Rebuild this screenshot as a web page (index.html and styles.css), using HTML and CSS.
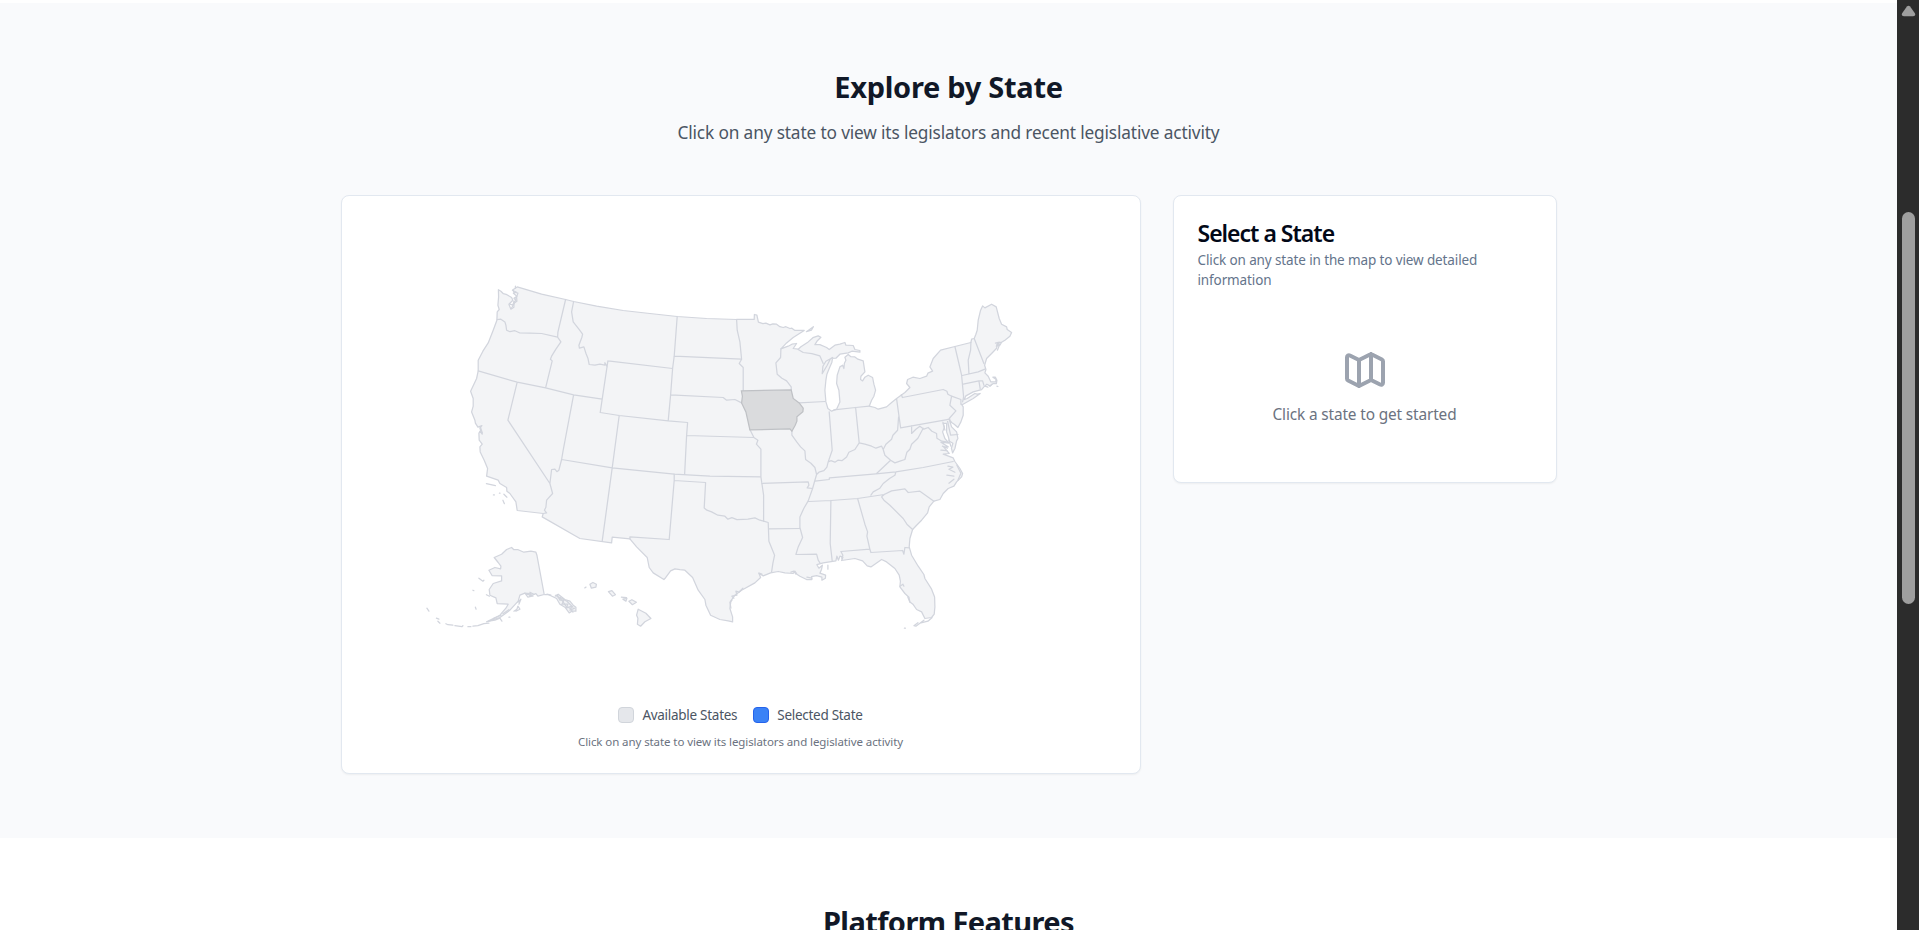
FILE: index.html
```html
<!DOCTYPE html>
<html lang="en">
<head>
<meta charset="utf-8">
<title>Explore by State</title>
<link rel="stylesheet" href="styles.css">
</head>
<body>
<div class="viewport">
<main class="page">
  <section class="explore">
    <div class="container">
      <h2 class="heading"><span class="t-explore">Explore by State</span></h2>
      <p class="lead"><span class="t-lead">Click on any state to view its legislators and recent legislative activity</span></p>
      <div class="grid">
        <div class="card map-card">
          <svg class="us-map" viewBox="366.1 219.8 750 469" role="img" aria-label="Map of the United States">
            <g class="state">
              <path d="M498.5 289.5L501 291 503.5 293.5 507 294.5 511.7 297.3 513 300 509 304 511 309 514 307 514 303 517 301 516.7 296.5 518 293 514 292 513 289.500 517.3 286.700 541.700 294 565.700 299.300 573.700 301.300 596.700 306 623.300 310.300 650 313.300 677.300 316.300 706.700 318.300 736.700 319.300 754.300 319.300 754.500 314.300 757 315 758.500 322 763 323.500 766 323 770 324.700 773 323.600 776.700 324 780 326.500 783.300 327.300 786 326.500 790 328.300 792 328 795 330.300 804.300 330.300 793.300 337.300 786.700 342.700 781 348.700 788.300 346 792 344 796.700 343.300 793.300 348.300 798.300 349 801 346.500 808.300 341.700 813 337.500 818.300 335.700 821 337 817.500 340.500 815 344.500 820 344.500 826.700 347.300 829.300 349.300 835 345 840 344 845 342.300 846 345 853.300 345.300 855 349.300 860 350.300 860 352 852 351 848.300 352.700 840 354 836 358 830.700 358.300 827.300 365 822.300 373.500 823 366 826 361 832.700 357.300 832 362 829.300 368.300 827 374 826 380 825 390 826 401.700 828 408.300 831.700 411 836.700 409 840 401.700 839 390 836.700 383.300 837.300 375 840 366.700 842.700 365 844 368.300 844.500 363 846 360 845 357 848.300 354.300 851 356.500 855 356.700 858 359 863.300 360.700 865 371.700 861 376 860.700 379.300 862.700 380.700 865 377 868.300 375 872.700 377.300 874 384 875.700 390 874 396 871.700 400 869.300 406 875 407.300 878.300 409 886.700 406.700 892 402 896.700 398.300 905 392.300 910 387.300 906.700 383.300 907.700 379.300 913 377 920 378.300 926.700 376 928 373 932.700 371 930 366.700 933.300 358.300 940.700 350 955 346.300 971 342.300 971.700 339 974.300 338.300 976 334 977.300 330 978.300 320 980.700 310 982.700 305.700 985 307.700 991.700 304 996.300 306.700 999.300 318.300 1001.700 324 1006.700 326.700 1007.300 329.300 1011.700 332.300 1010 336 1005 340 1001.700 342 1000 345 997.700 343 996.700 348 991.700 353.300 986.700 358.300 984.700 365 986 369.300 985 372.700 988.300 376 991 381.700 996 381.700 996 379 993 377 995.500 377 997 380 996.500 383.500 993 383.500 990 385.700 987 384 984 386.700 981.700 389.500 973.300 391.700 966 395.700 964 399.500 967.300 398.300 975 393.300 977.300 394 980.300 393.300 973.300 398.300 962.700 404.300 961.500 404 963.300 406.700 963.300 415 961 421.700 958 427.300 954.300 424 951.700 422.300 949.300 419.300 951.700 426.700 956.700 431.700 958 438.300 956.700 440.700 955 448.300 952.700 452.700 951.500 448 953 443 949.500 441 948.300 436 946.700 431.700 946.700 423.300 943.300 423.300 944.500 427 942.700 431.700 945 438.300 949 443 941 442 948.300 446.700 944 447 949.300 453.300 943.300 454 953.300 457.700 955 461.300 960 468.300 962.700 473.300 961.700 476.700 956.700 481.700 954 486 948.300 488.300 943.300 493.300 940 499.300 934 501 929.300 506.700 927.700 512.700 921.700 520 916.700 525 912.700 529.300 910 538.300 909.300 546.700 911.700 555 918.300 566 924 574.300 925 578.300 931.700 589 934.700 596.700 935 606.700 934.300 614 931.700 617.300 925 618.300 921.700 611.700 916.700 609.300 913 604 910 601.700 909 597 905 593.300 900 586.700 900.500 581 899.300 575 895 568.300 886.700 561.700 881.700 559.300 876 563.300 871 566.700 867.300 565.700 862.700 560.700 855 558.300 841.700 560.300 843 557 840 556 838.500 560 837 556 836 560.700 823.300 562.700 817 564.500 819 568 822.500 565 821.700 569 820 573 825.700 575 825.500 578 822 580 822 577 816.700 575.500 811.700 576.500 812 579.300 806.700 579.300 800 576 797 574 795 571 793.300 573.300 785 572.700 778.300 571.300 770.700 572.700 763.300 575.700 759 573 760.700 577.300 755 582.700 741.700 590 735 595 731 600.700 730 608.300 732.700 616.700 732.700 621.700 728.300 620.700 720 619.300 710.700 615 706 605 705 599.300 698.300 590 692.700 577.300 685 570 680 569.500 675 568.700 670.700 570.700 665 578.300 664 579.300 653.300 572.700 649.300 567.300 647.300 557.300 636.700 546.700 630 538.700 612.300 537 611.700 542.700 580 538.300 542.300 516.700 543.300 513.300 517.300 510.300 516 501.700 510 493.300 507 491 506.700 487.300 500 483.300 498.300 480 486.700 476 487.700 468.300 484.300 460 480.300 451.700 480 446.700 482.300 444 479.300 440 479 433 480 431 482.300 434 480 428 482 425.500 478 427 475.500 423 475 420 471.700 411.700 473.300 406 473.300 398.300 470.700 391 476.700 378.300 478.300 370.700 478.300 360 483 351 488.300 342.700 493.300 330 497 320 497.300 311.700 499.300 309.300 498 305 498.700 296.700Z"/>
              <path class="alaska" d="M511.700 547.300L514 549.500 518.300 549.500 524 552 531 551 536 552 537 555 544.300 594.300 538 596 536 593.500 530 596 530 593.300 525 593 520 595 518.300 601 510 610 500 617.300 486.700 621.700 500 615 506 608 508.300 604 497.300 603.500 496 597.700 490 595 489.300 589.300 493.300 583.300 501.700 580.700 501.700 575.700 492.300 575.500 489 570 495 567.300 500.700 568.700 501 566 498.300 562.300 494.300 557.300 501.700 554 506.700 549.300Z"/>
              <path d="M544.300 594.300L548.300 594.300 556.700 598.300 560 604 565 607 569.300 612.700 572 611 576 611 576 607 573.300 605 570 601 565 599.300 558.300 594 555 596M557 594L560 600 564 600 562 604 568 604 566 608 572 606 570 610 575 608M590 584l3-1.700 3.500 1.700-.5 3-4.500 1zM608.500 591.500l3.500-1 3.500 4-3 1.500zM621 597l6 .500M623 599l4-1-1 3zM629 601l3-1.500 4.500 2.500-4 2.500zM638.300 609L646 613 651 618.300 645 621.500 640.700 626 637.500 624 638 618 636.700 615ZM584.500 588l2-1.500"/>
            </g>
            <g class="borders">
              <path d="M497.300 319.300L501 319 505 321.700 506 325 506.700 330 510 331.500 515 330.500 520 332.800 530 333 541.700 333.300 557.700 337M565.700 299.300L558 332 557.700 337 561 341.700 556 349 551.700 356 550.500 359 552.300 360.700 545.700 387.700M478.300 370.700L517.300 382 545.700 387.700 573.700 394.700 602.300 399M517.300 382L508 420 550 483.300 552.700 493.300 546.700 500 546 507 544.500 510 546.700 512.700 543.300 513.300M550 483.300L551.700 469.300 555 469 557 471.500 559 470 561.700 459.300M573.700 394.700L563.300 450 561.700 459.300 612.300 467.700 674.300 474 710 476 761 476.700M612.300 467.700L602.300 541M612.300 467.700L619.300 415.300M608 360.700L602.300 399 600.300 412.300 619.300 415.300 668.300 420.700 687.700 422.300 686.700 435.300 684.700 474.500M573.700 301.300L571.700 311.700 573.300 321.700 579 329 582.700 334 582 337 579 345 579.500 348 584 346.700 586 353 588 358 589.300 364.300 595 365 600 364 605 365 605 362.500 607.300 366.700M608 360.700L672.700 368.300M677.300 316.300L674.300 356 672.700 368.300 670.700 394.700 668.300 420.700M674.300 356L741.700 359M670.700 394.700L723.300 397.300 726.700 400 735 399.300 741.700 402.700M686.700 435.300L754 437.300M736.700 319.300L737.300 330 740 341.700 741.700 359 739.300 363.300 743.300 367.300 743.300 390.700M750 429.300L754 437.300 758 440 756.500 444 761 449 761 476.700 762 483.300 763.700 495 763.700 521M781 348.700L780.700 357.300 776 362.700 777.300 374 782 378 786.700 380.700 791.300 386.700 791.300 389.700M799.300 402.700L825.300 401.300M798.300 349.300L803.300 352.300 812 353.500 820 355.700 823.300 363.300"/>
              <path d="M792 431L792 435 797 442 800.700 446.700 805 450.700 805.700 459.300 811 463 815 467.300 816.700 474.300 815 480 812.700 488.300 808.300 500.700 804 508 800 516.700 800 527.300 802.700 537.300 798.300 546.700 796 554.300 816.700 554 818.300 560 820 562.700M762 483.300L808.300 481.700 809 485 807.300 487.700 812.700 488.300M769 528.700L799.300 528.300M763.700 521L768.300 522.300 769 541 774.700 555 773 563 771.700 571.700M674.300 480.300L705.700 482.300 704.300 507.700 707 510 711.700 511.700 718 515 725 516 728 519 732 517.500 737 519.500 743.300 519.200 748 519 755 517.700 760 520 763.700 521M674.300 474L674.300 480.300 669.300 539.300 630 536.700 630 538.700M829.300 411.700L832.300 450 828.300 461.700 827 467 824 470.500 819 472 816.700 474.300M834 409.700L855.700 407.300 869.300 406M855.700 407.300L859.300 442.700M828.300 461.700L831 460.500 835 462 838 460 842 460.500 846.700 456.700 849 452 855 449.300 859.300 442.700 865 444 871.700 446 876 448 881.700 446 883.300 449.300 885 455 890.700 460 876.700 473.300M883.300 449.300L886 444 891.700 439 893 435 897.700 430 898.700 416.700M896.700 398.700L900.700 427.700 950 419M901.500 394.500L902.500 397.300 943.300 389.300 947 391 948 394 951.700 396 961 399.300 961 404M951.700 396L950 405 956 410.700 949.300 418.300M890.700 460L895 462.700 900 461 905 459.300 907 452 910 449 911.700 444 918 438 923.300 428M911.700 425.500L911.700 433.300 916 429 920 426 924 429 928.300 427.300 932 431 936.700 433.300 937 438 942 441 948 442M947.300 419.300L950.700 435 958 434.300M815 481L829.300 479.300 829.500 477.700 876 473.700 896 471.700 923.300 467.300 953.300 461.300M896 471.700L895 475 890 478 883.300 483.300 880 488 873.300 491.700 871 495M809 501.300L831 500.300 857.700 498.300 884.300 494.300 891.700 490.700 905 488.700 908.300 492.300 920 491 934 501M884.300 494.300L881.700 496.700 884 500 890 505 903.300 518.300 907 524 912.700 529.300M831 500.300L830.300 543.300 832.300 560.700M857.700 498.300L865 524 867.700 531.700 867 536 868.300 541.700 870 549.300M841.700 558L843 555 841 551.300 870 549 871 552.300 902.700 550.300 904 554 905 547.300 909.300 547.700M955 346.300L959 363.300 961.700 375 963.700 396.700 962.700 401.700M971 342.300L970.700 350 968.300 360 969 372.700M974.300 338.300L984 363.300M962.300 375.300L978.300 371.700 985 369M963.300 384L979 380.700 982.700 380.700 984 385M979 380.700L980.300 388.700"/>
              <path d="M512.500 290l4 2-3 1 3.500 3-3 2 2.500 3M515.500 286v2M510 304l3 1 1-4M511.500 308l3-5 2-6M806.500 331.500l7-5-2 3.500zM995.500 343l4-1-3 4 3-1-2 5M997 344l4-2M985 386l3 1M990 386l2-2M997 386l1 .300M942.500 446l5 2M941 450l6 .500M948 466l5 1-4 2 6 3M947 475l7 1M949 483l5-4M957 465l4 8-3 7M932 617.500l-4 3.500-8 2 4-3-8 6-2-.5 4-3M904.500 628h1M828 565v4M900 586l3-2 1 2M908 597l2 5M759 573l3 1M743 588l-4 4-3-1 1 4-5 1 2 2M732 600l-2 2 1 6M791 572l3-1 2 3M807 577l5 1M486.500 483.500l9 2M493.500 494.800h1M499.500 493h.6M504 494l3 3M503 500l1.500 3.500M551 595l-4-1M480.500 427l2 6M943 422l2 8M949 440l2 6"/>
              <path d="M427 608l2 3M436.500 618l2.500 1M438 621l2 2M446 623.500l2 1 5 .500M455 625.500l7 1 1-1M468 626.500h3M473 626l5-.5 6-2 5-.5M489 621l6-1 5-2 2 3M494 618l7-3M503 613.500l6-4M509 617h1M514 611l3-2 1-3 2 3-4 2M518 602l3-3-2 5M525 593l3 4 4-1-2-4 4 2M527 594l6 2M486.500 594.500l3 1.500M479 578l4 3 1-1M473 590l1 .500M475.500 607l.7 2M556 595l6 5 4 6 4 2 3 4M560 597l7 4 6 6"/>
            </g>
            <path class="state-hover" d="M741.500 390.700L791.300 389.700 793.300 398.300 799.300 402.700 803.300 408 803 411.500 797 416.700 797 421 795.300 425 792 431 790 428.700 750 429.700 746 411.700 741.700 402.700 742.500 396Z"/>
          </svg>
          <div class="legend">
            <div class="legend-item"><i class="swatch"></i><span class="t-avail">Available States</span></div>
            <div class="legend-item"><i class="swatch swatch-selected"></i><span class="t-sel">Selected State</span></div>
          </div>
          <p class="hint"><span class="t-hint">Click on any state to view its legislators and legislative activity</span></p>
        </div>
        <div class="card side-card">
          <h3 class="side-title"><span class="t-title">Select a State</span></h3>
          <p class="side-desc">Click on any state in the map to view detailed information</p>
          <div class="empty">
            <svg class="map-icon" viewBox="0 0 24 24"><path d="M9 20l-5.447-2.724A1 1 0 013 16.382V5.618a1 1 0 011.447-.894L9 7m0 13l6-3m-6 3V7m6 10l4.553 2.276A1 1 0 0021 18.382V7.618a1 1 0 00-.553-.894L15 4m0 13V4m0 0L9 7"/></svg>
            <p class="empty-text"><span class="t-empty">Click a state to get started</span></p>
          </div>
        </div>
      </div>
    </div>
  </section>
  <section class="features">
    <h2 class="heading"><span class="t-features">Platform Features</span></h2>
  </section>
</main>
<aside class="scrollbar">
  <svg class="arrow" viewBox="0 0 16 12"><path d="M6.300 1.300Q8-.5 9.700 1.300L14.800 8.500Q16 11.500 13 11.500H3Q0 11.500 1.200 8.500Z"/></svg>
  <div class="thumb"></div>
</aside>
</div>
</body>
</html>
```
FILE: styles.css
```css
* { box-sizing: border-box; margin: 0; padding: 0; }
body { font-family: "Noto Sans", "Open Sans", sans-serif; background: #fff; overflow: hidden; }
.viewport { display: flex; height: 930px; overflow: hidden; }
.page { flex: 1; padding-top: 3px; }
.explore { background: #f9fafc; padding: 64px 0; }
.container { width: 1216px; margin: 0 auto; }
.heading { font-size: 29px; line-height: 36px; font-weight: 700; color: #111827; text-align: center; margin-bottom: 16px; padding-top: 2px; height: 36px; white-space: nowrap; }
.lead { font-size: 17.3px; line-height: 28px; color: #4b5563; text-align: center; margin-bottom: 48px; }
.grid { display: grid; grid-template-columns: 800px 384px; gap: 32px; align-items: start; }
.card { background: #fff; border: 1px solid #e2e8f0; border-radius: 8px; padding: 24px; box-shadow: 0 1px 2px rgba(0, 0, 0, .05); }
.us-map { display: block; width: 750px; height: 469px; }
.state path { fill: #f3f4f6; stroke: #d2d5dd; stroke-width: 1.25; stroke-linejoin: round; }
.borders path { fill: none; stroke: #d2d5dd; stroke-width: 1.25; stroke-linejoin: round; stroke-linecap: round; }
.state-hover { fill: #dadbdd; stroke: #bfc1c5; stroke-width: 1.25; }
.legend { display: flex; justify-content: center; gap: 16px; margin-top: 16px; height: 20px; font-size: 13.5px; line-height: 20px; color: #4b5563; }
.legend-item { display: flex; align-items: center; gap: 8px; white-space: nowrap; }
.swatch { width: 16px; height: 16px; border: 1px solid #d1d5db; border-radius: 4px; background: #e5e7eb; }
.swatch-selected { background: #3b82f6; border-color: #2563eb; }
.hint { height: 16px; padding-top: 1px; margin-top: 8px; font-size: 11.5px; line-height: 16px; color: #6b7280; text-align: center; }
.side-title { height: 24px; padding-top: 1px; font-size: 23px; line-height: 24px; font-weight: 600; color: #020817; white-space: nowrap; }
.side-desc { margin-top: 6px; font-size: 13.5px; line-height: 20px; color: #64748b; letter-spacing: -.12px; }
.empty { display: flex; flex-direction: column; align-items: center; padding: 32px 0; margin-top: 24px; }
.map-icon { width: 48px; height: 48px; fill: none; stroke: #9ca3af; stroke-width: 2; stroke-linecap: round; stroke-linejoin: round; }
.empty-text { margin-top: 8px; height: 24px; padding-top: 1px; font-size: 15.4px; line-height: 24px; color: #6b7280; }
.t-explore { letter-spacing: -.28px; }
.t-features { letter-spacing: -.58px; }
.t-lead { letter-spacing: -.155px; }
.t-title { letter-spacing: -1px; }
.t-empty { letter-spacing: -.14px; }
.t-avail, .t-sel { letter-spacing: -.28px; }
.t-hint { letter-spacing: -.09px; }
.features { padding-top: 64px; }
.scrollbar { width: 22px; background: #2c2c2c; padding: 5px 4px 0 5px; }
.arrow { display: block; width: 15px; height: 12px; margin-left: -1px; fill: #9f9f9f; }
.thumb { width: 13px; height: 392px; margin-top: 195px; border-radius: 6.500px; background: #9f9f9f; }
```
